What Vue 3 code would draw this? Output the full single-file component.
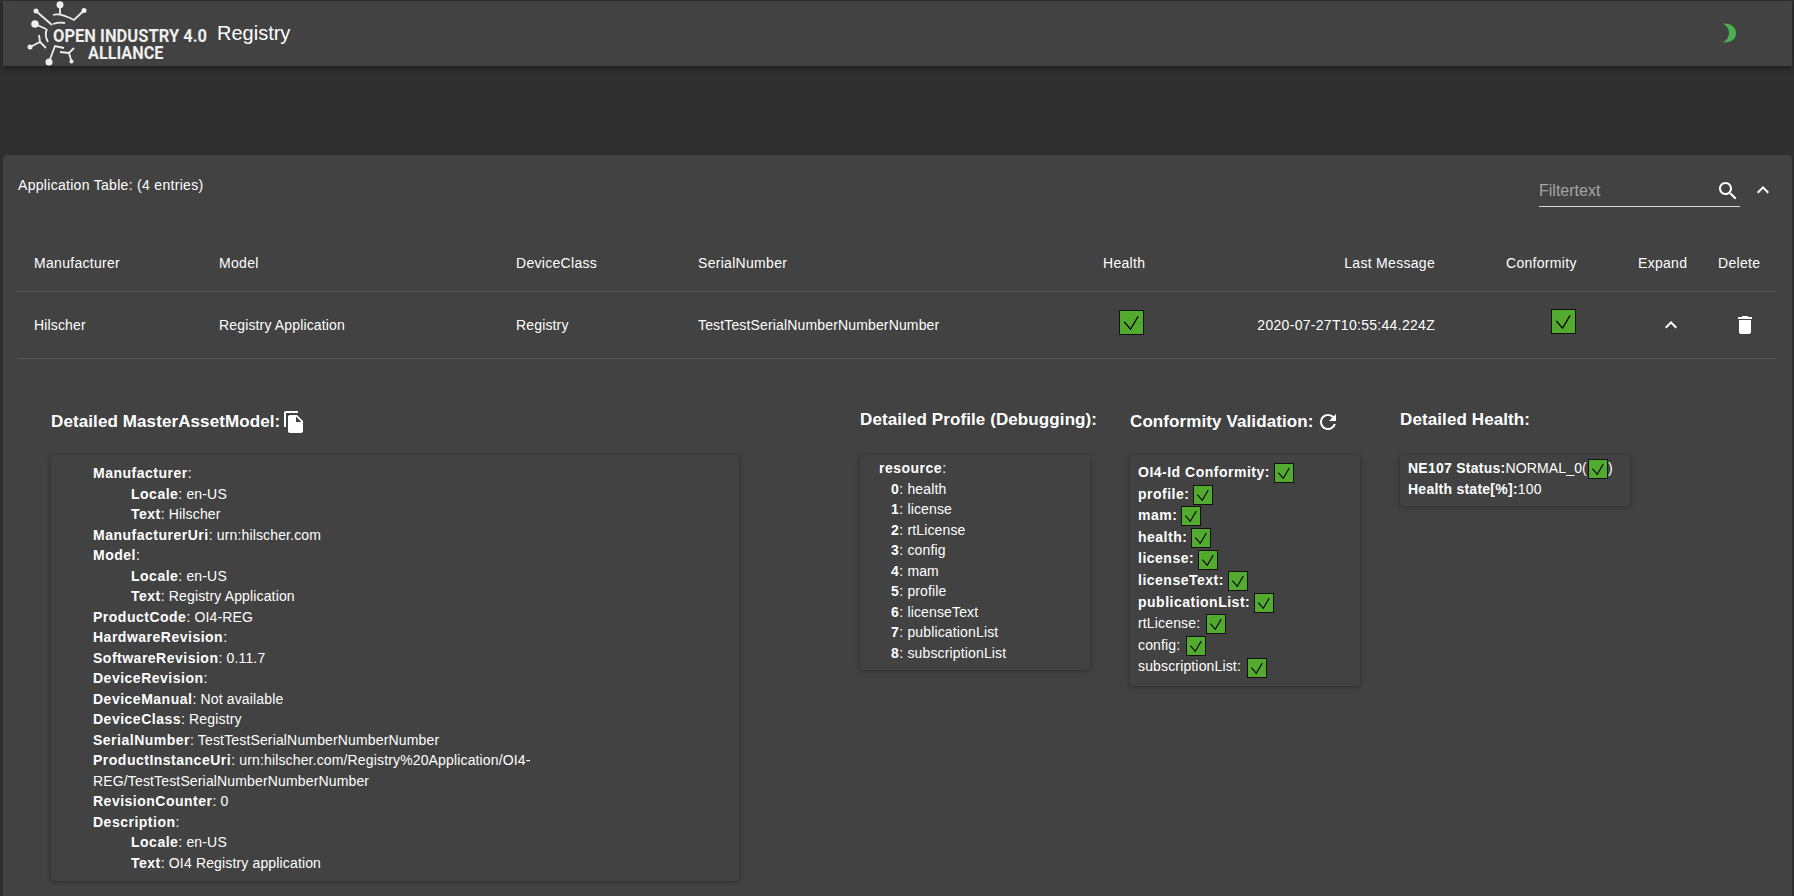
<script setup>
const headers = [
  { label: 'Manufacturer', cls: 'c-left' },
  { label: 'Model', cls: 'c-left' },
  { label: 'DeviceClass', cls: 'c-left' },
  { label: 'SerialNumber', cls: 'c-left' },
  { label: 'Health', cls: 'h-health' },
  { label: 'Last Message', cls: 'c-right' },
  { label: 'Conformity', cls: 'h-conf' },
  { label: 'Expand', cls: 'h-expand' },
  { label: 'Delete', cls: 'h-delete' }
]
const mam = [
  { k: 'Manufacturer' },
  { k: 'Locale', v: 'en-US', sub: true },
  { k: 'Text', v: 'Hilscher', sub: true },
  { k: 'ManufacturerUri', v: 'urn:hilscher.com' },
  { k: 'Model' },
  { k: 'Locale', v: 'en-US', sub: true },
  { k: 'Text', v: 'Registry Application', sub: true },
  { k: 'ProductCode', v: 'OI4-REG' },
  { k: 'HardwareRevision' },
  { k: 'SoftwareRevision', v: '0.11.7' },
  { k: 'DeviceRevision' },
  { k: 'DeviceManual', v: 'Not available' },
  { k: 'DeviceClass', v: 'Registry' },
  { k: 'SerialNumber', v: 'TestTestSerialNumberNumberNumber' },
  { k: 'ProductInstanceUri', v: 'urn:hilscher.com/Registry%20Application/OI4-REG/TestTestSerialNumberNumberNumber' },
  { k: 'RevisionCounter', v: '0' },
  { k: 'Description' },
  { k: 'Locale', v: 'en-US', sub: true },
  { k: 'Text', v: 'OI4 Registry application', sub: true }
]
const resources = ['health', 'license', 'rtLicense', 'config', 'mam', 'profile', 'licenseText', 'publicationList', 'subscriptionList']
const conformity = [
  { k: 'OI4-Id Conformity', b: true },
  { k: 'profile', b: true },
  { k: 'mam', b: true },
  { k: 'health', b: true },
  { k: 'license', b: true },
  { k: 'licenseText', b: true },
  { k: 'publicationList', b: true },
  { k: 'rtLicense' },
  { k: 'config' },
  { k: 'subscriptionList' }
]
const check = 'M4.5 11.5L11 19L19 5.5'
</script>

<template>
  <div class="page">
    <header class="bar">
      <svg class="logo" width="214" height="65" viewBox="3 1 214 65">
        <g fill="none" stroke="#eeeeee" stroke-width="1.800">
          <path d="M60 5V14M53 15Q60 12.500 74 20L84 10.500M36 11L52 25M53 24Q59 22 65 23M35 24L46 29M47 29Q44 35 48 42M30 47L40 42M39 35L40 42L46 48M49 62L55 46L64 48M71.500 61.500L69 53M60 52L69 53L74 48" />
        </g>
        <g fill="#eeeeee">
          <circle cx="60" cy="4.700" r="3.500" />
          <circle cx="84" cy="10.500" r="2.500" />
          <circle cx="36" cy="11" r="2.500" />
          <circle cx="35" cy="24" r="3.800" />
          <circle cx="30" cy="47" r="2.500" />
          <circle cx="49" cy="62" r="3.500" />
          <circle cx="71.500" cy="61.500" r="2" />
        </g>
        <text class="logo-text" x="53" y="41.500" textLength="154" lengthAdjust="spacingAndGlyphs">OPEN INDUSTRY 4.0</text>
        <text class="logo-text" x="88" y="59" textLength="75.500" lengthAdjust="spacingAndGlyphs">ALLIANCE</text>
      </svg>
      <span class="app-title">Registry</span>
      <svg class="spinner" width="16" height="22" viewBox="0 0 16 22">
        <path d="M1 1.500C9 1 14 5 14 11C14 17 9 21 1 20.500C5 18 7 15 7 11C7 7 5 4 1 1.500Z" fill="#4caf50" />
      </svg>
    </header>

    <section class="card">
      <div class="card-top">
        <span class="card-title">Application Table: (4 entries)</span>
        <div class="filter">
          <span class="placeholder">Filtertext</span>
          <svg class="icon" viewBox="0 0 24 24"><path d="M15.500 14h-.79l-.28-.27C15.410 12.590 16 11.110 16 9.500 16 5.910 13.090 3 9.500 3S3 5.910 3 9.500 5.910 16 9.500 16c1.610 0 3.090-.59 4.230-1.570l.27.28v.79l5 4.990L20.490 19l-4.990-5zm-6 0C7.010 14 5 11.990 5 9.500S7.010 5 9.500 5 14 7.010 14 9.500 11.990 14 9.500 14z" /></svg>
        </div>
        <svg class="icon top-chevron" viewBox="0 0 24 24"><path d="M12 8l-6 6 1.410 1.410L12 10.830l4.590 4.580L18 14z" /></svg>
      </div>

      <div class="grid head">
        <div v-for="h in headers" :key="h.label" :class="h.cls">{{ h.label }}</div>
      </div>
      <div class="grid row">
        <div class="c-left">Hilscher</div>
        <div class="c-left">Registry Application</div>
        <div class="c-left">Registry</div>
        <div class="c-left">TestTestSerialNumberNumberNumber</div>
        <div class="cell-health">
          <svg class="ok big" viewBox="0 0 24 24"><path :d="check" /></svg>
        </div>
        <div class="c-right">2020-07-27T10:55:44.224Z</div>
        <div class="cell-conf">
          <svg class="ok big" viewBox="0 0 24 24"><path :d="check" /></svg>
        </div>
        <div class="cell-expand">
          <svg class="icon" viewBox="0 0 24 24"><path d="M12 8l-6 6 1.410 1.410L12 10.830l4.590 4.580L18 14z" /></svg>
        </div>
        <div class="cell-delete">
          <svg class="icon" viewBox="0 0 24 24"><path d="M6 19c0 1.100.9 2 2 2h8c1.100 0 2-.9 2-2V7H6v12zM19 4h-3.500l-1-1h-5l-1 1H5v2h14V4z" /></svg>
        </div>
      </div>

      <div class="details">
        <div>
          <h3 class="heading">Detailed MasterAssetModel:
            <svg class="icon copy" viewBox="0 0 24 24"><path d="M16 1H4c-1.100 0-2 .9-2 2v14h2V3h12V1zm-1 4l6 6v10c0 1.100-.9 2-2 2H7.990C6.890 23 6 22.100 6 21l.01-14c0-1.100.89-2 1.990-2h7zm-1 7h5.500L14 6.500V12z" /></svg>
          </h3>
          <div class="paper paper-mam">
            <div v-for="(m, i) in mam" :key="i" class="mam-line" :class="{ sub: m.sub }">
              <b>{{ m.k }}</b>{{ m.v ? ': ' + m.v : ':' }}
            </div>
          </div>
        </div>
        <div>
          <h3 class="heading heading-high">Detailed Profile (Debugging):</h3>
          <div class="paper paper-profile">
            <div><b>resource</b>:</div>
            <div v-for="(r, i) in resources" :key="r" class="res"><b>{{ i }}</b>{{ ': ' + r }}</div>
          </div>
        </div>
        <div>
          <h3 class="heading">Conformity Validation:
            <svg class="icon refresh" viewBox="0 0 24 24"><path d="M17.650 6.350C16.200 4.900 14.210 4 12 4c-4.420 0-7.990 3.580-7.990 8s3.570 8 7.990 8c3.730 0 6.840-2.550 7.730-6h-2.080c-.82 2.330-3.040 4-5.650 4-3.310 0-6-2.690-6-6s2.690-6 6-6c1.660 0 3.140.69 4.220 1.780L13 11h7V4l-2.350 2.350z" /></svg>
          </h3>
          <div class="paper paper-conf">
            <div v-for="c in conformity" :key="c.k" class="conf-line">
              <component :is="c.b ? 'b' : 'span'">{{ c.k }}:</component>
              <svg class="ok small" viewBox="0 0 24 24"><path :d="check" /></svg>
            </div>
          </div>
        </div>
        <div>
          <h3 class="heading heading-high">Detailed Health:</h3>
          <div class="paper paper-health">
            <div class="health-line"><b>NE107 Status:</b>NORMAL_0(<svg class="ok small" viewBox="0 0 24 24"><path :d="check" /></svg>)</div>
            <div><b>Health state[%]:</b>100</div>
          </div>
        </div>
      </div>
    </section>
  </div>
</template>

<style>
html, body { margin: 0; background: #303030; overflow: hidden; }
</style>

<style scoped>
.page {
  height: 896px;
  overflow: hidden;
  box-sizing: border-box;
  padding: 1px 2px 0 3px;
  background: #303030;
  color: #fff;
  font: 14px/20.5px "Liberation Sans", Arial, sans-serif;
  letter-spacing: 0.15px;
}
.page b { letter-spacing: 0.5px; }
.bar {
  height: 65px;
  background: #424242;
  display: flex;
  align-items: center;
  position: relative;
  box-shadow: 0 2px 4px -1px rgba(0,0,0,.2), 0 4px 5px rgba(0,0,0,.14), 0 1px 10px rgba(0,0,0,.12);
}
.logo { flex: none; }
.logo-text { font: 700 18px Roboto, sans-serif; fill: #eeeeee; letter-spacing: 0; }
.app-title { font-size: 20px; line-height: 28px; letter-spacing: 0; margin-top: -2px; }
.spinner { margin-left: auto; margin-right: 54px; margin-top: -2px; }
.card {
  margin-top: 89px;
  height: 760px;
  background: #424242;
  border-radius: 4px 4px 0 0;
  box-shadow: 0 1px 3px rgba(0,0,0,.2);
  padding-left: 14px;
  padding-right: 17px;
}
.card-top { display: flex; align-items: flex-start; height: 87px; }
.card-title { margin: 20px 0 0 1px; letter-spacing: 0.3px; }
.filter {
  width: 201px;
  height: 31px;
  margin: 18px 0 0 auto;
  padding-top: 2px;
  border-bottom: 1px solid #d8d8d8;
  display: flex;
  align-items: center;
  justify-content: space-between;
}
.placeholder { font-size: 16px; color: #a5a5a5; letter-spacing: 0; margin-top: 2px; }
.icon { width: 24px; height: 24px; fill: #fff; display: inline-block; flex: none; }
.top-chevron { margin: 23px 0 0 11px; }
.grid {
  display: grid;
  grid-template-columns: 185px 297px 182px 404px 140px 225px 170px 80px 76px;
  align-items: center;
  border-bottom: 1px solid #565656;
  width: 1759px;
}
.head { height: 42px; padding-bottom: 7px; letter-spacing: 0.3px; }
.row { height: 66px; }
.c-left { padding-left: 17px; }
.c-right { text-align: right; padding-right: 15px; letter-spacing: 0.3px; }
.h-health { padding-left: 18px; }
.h-conf { padding-left: 56px; }
.h-expand { padding-left: 18px; }
.h-delete { padding-left: 18px; }
.cell-health { padding-left: 34px; height: 26px; margin-top: -4px; }
.cell-conf { padding-left: 101px; height: 26px; margin-top: -7px; }
.cell-expand { padding-left: 39px; height: 24px; }
.cell-delete { padding-left: 33px; height: 24px; }
.ok {
  background: #52ab2e;
  border: 1.300px solid #111;
  box-sizing: border-box;
  fill: none;
  stroke: #000;
  stroke-width: 1.400;
}
.ok.big { width: 25px; height: 25px; display: block; }
.ok.small { width: 20px; height: 20px; vertical-align: middle; margin-left: 4px; }
.health-line .ok.small { margin-left: 1px; }
.paper-health b { letter-spacing: 0.25px; }
.conf-line span { margin-right: 2px; }
.details {
  display: grid;
  grid-template-columns: 809px 270px 270px 230px;
  padding: 36px 0 0 34px;
}
.heading {
  margin: 0;
  height: 53px;
  padding-bottom: 7px;
  font-size: 17px;
  line-height: 24px;
  font-weight: 700;
  letter-spacing: 0.1px;
  display: flex;
  align-items: center;
  gap: 2px;
}
.heading-high { align-items: flex-start; padding-top: 12.500px; height: 47.500px; padding-bottom: 0; }
.paper {
  background: #424242;
  border-radius: 4px;
  box-shadow: 0 1px 5px rgba(0,0,0,.35);
  box-sizing: border-box;
}
.paper-mam { width: 688px; height: 426px; padding: 8px 180px 0 42px; }
.mam-line.sub { padding-left: 38px; }
.paper-profile { width: 230px; height: 215px; padding: 3px 0 0 19px; }
.res { padding-left: 12px; }
.paper-conf { width: 230px; height: 231px; padding: 7px 0 0 8px; }
.conf-line { height: 21.600px; line-height: 21px; white-space: nowrap; }
.paper-health { width: 230px; height: 51px; padding: 3px 0 0 8px; }
.health-line { white-space: nowrap; }
</style>
